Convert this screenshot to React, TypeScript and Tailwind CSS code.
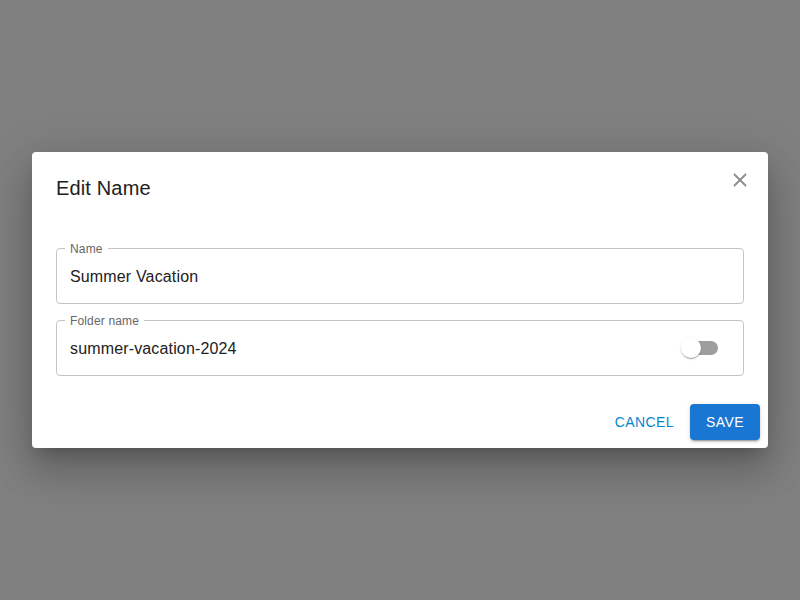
import React from "react";

export default function App() {
  return (
    <div
      className="w-[800px] h-[600px] bg-[#808080] flex items-center justify-center"
      style={{ fontFamily: "'Liberation Sans', Arial, sans-serif" }}
    >
      <div className="w-[736px] h-[296px] bg-white rounded-[4px] shadow-[0_11px_15px_-7px_rgba(0,0,0,0.2),0_24px_38px_3px_rgba(0,0,0,0.14),0_9px_46px_8px_rgba(0,0,0,0.12)] flex flex-col relative">
        <div className="flex items-center justify-between pt-5 pl-6 pr-[21px] h-[52px]">
          <h2 className="text-[20px] leading-[32px] tracking-[0.15px] text-[#212121] font-normal">Edit Name</h2>
          <button className="w-[14px] h-[14px] flex items-center justify-center -mt-4 text-[#8a8a8a]">
            <svg width="14" height="14" viewBox="0 0 14 14" fill="none" stroke="currentColor" strokeWidth="1.8">
              <path d="M1 1 L13 13 M13 1 L1 13" />
            </svg>
          </button>
        </div>
        <div className="flex flex-col gap-4 px-6 pt-[44px]">
          <div className="relative h-[56px] border border-[#c4c4c4] rounded-[4px] flex items-center px-[13px] pt-[2px]">
            <span className="absolute -top-[8px] left-[8px] px-[5px] bg-white text-[12px] leading-[16px] tracking-[0.15px] text-[#666666]">Name</span>
            <span className="text-[16px] tracking-[0.15px] text-[#212121]">Summer Vacation</span>
          </div>
          <div className="relative h-[56px] border border-[#c4c4c4] rounded-[4px] flex items-center justify-between pl-[13px] pr-[25px]">
            <span className="absolute -top-[8px] left-[8px] px-[5px] bg-white text-[12px] leading-[16px] tracking-[0.15px] text-[#666666]">Folder name</span>
            <span className="text-[16px] tracking-[0.15px] text-[#212121] pt-[2px]">summer-vacation-2024</span>
            <div className="relative w-[37px] h-[20px] flex items-center">
              <div className="absolute left-[3px] w-[34px] h-[14px] rounded-full bg-[#9e9e9e]" />
              <div className="absolute left-0 w-[20px] h-[20px] rounded-full bg-white shadow-[0_2px_1px_-1px_rgba(0,0,0,0.2),0_1px_1px_0_rgba(0,0,0,0.14),0_1px_3px_0_rgba(0,0,0,0.12)]" />
            </div>
          </div>
        </div>
        <div className="mt-auto flex justify-end items-center gap-2 p-2">
          <button className="h-[36px] px-[8px] text-[14px] font-normal tracking-[0.4px] text-[#0288d1] rounded-[4px]">CANCEL</button>
          <button className="h-[36px] w-[70px] text-[14px] font-normal tracking-[0.4px] text-white bg-[#1976d2] rounded-[4px] shadow-[0_3px_1px_-2px_rgba(0,0,0,0.2),0_2px_2px_0_rgba(0,0,0,0.14),0_1px_5px_0_rgba(0,0,0,0.12)]">SAVE</button>
        </div>
      </div>
    </div>
  );
}
